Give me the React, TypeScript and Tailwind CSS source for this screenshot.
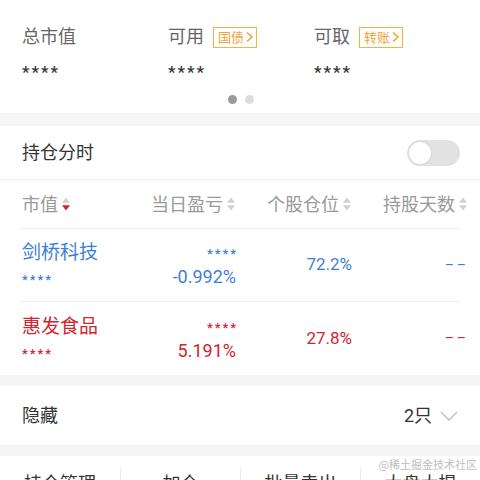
import React from "react";

const FONT = { fontFamily: 'Roboto, "Noto Sans CJK SC", sans-serif' };

function Sort({ active }: { active?: boolean }) {
  return (
    <svg width="10" height="16" viewBox="0 0 10 16" className="ml-[3px] shrink-0">
      <path d="M5 1.5 L9 6.8 L1 6.8 Z" fill="#d0d0d0" />
      <path d="M5 14.5 L9 9.2 L1 9.2 Z" fill={active ? "#d8202c" : "#d0d0d0"} />
    </svg>
  );
}

function Badge({ text }: { text: string }) {
  return (
    <span className="ml-[9px] flex h-[21px] items-center border border-[#f0b24a] pl-[4px] pr-[2px] text-[13px] leading-none text-[#eda63a]">
      {text}
      <svg width="9" height="12" viewBox="0 0 9 12" className="ml-[1px]">
        <path d="M2 1.5 L7 6 L2 10.5" fill="none" stroke="#eda63a" strokeWidth="1.6" />
      </svg>
    </span>
  );
}

function Stat({ label, badge }: { label: string; badge?: string }) {
  return (
    <div className="flex flex-col">
      <div className="flex h-[24px] items-center">
        <span className="text-[18px] leading-[24px] text-[#666]">{label}</span>
        {badge && <Badge text={badge} />}
      </div>
      <div className="mt-[11px] h-[24px] text-[17px] font-medium leading-[24px] tracking-[2px] text-[#333]">****</div>
    </div>
  );
}

type Row = { name: string; pct: string; pos: string; color: string };

const rows: Row[] = [
  { name: "剑桥科技", pct: "-0.992%", pos: "72.2%", color: "text-[#3d7fd6]" },
  { name: "惠发食品", pct: "5.191%", pos: "27.8%", color: "text-[#d0242e]" },
];

export default function App() {
  return (
    <div className="relative h-[480px] w-[480px] overflow-hidden bg-white" style={FONT}>
      {/* top stats */}
      <div className="h-[113px] pt-[25px]">
        <div className="grid grid-cols-[146px_146px_146px] pl-[22px]">
          <Stat label="总市值" />
          <Stat label="可用" badge="国债" />
          <Stat label="可取" badge="转账" />
        </div>
        <div className="mt-[11px] flex justify-center gap-[8px] pl-[2px]">
          <span className="h-[9px] w-[9px] rounded-full bg-[#9a9a9a]" />
          <span className="h-[9px] w-[9px] rounded-full bg-[#dcdcdc]" />
        </div>
      </div>
      <div className="h-[13px] bg-[#f5f5f5]" />

      {/* 持仓分时 */}
      <div className="flex h-[53px] items-center justify-between pl-[22px] pr-[20px]">
        <span className="text-[18px] text-[#333]">持仓分时</span>
        <div className="flex h-[26px] w-[53px] items-center rounded-full bg-[#e2e2e2] pl-[2px]">
          <span className="h-[22px] w-[22px] rounded-full bg-white shadow-[0_0_2px_rgba(0,0,0,0.15)]" />
        </div>
      </div>
      <div className="h-px bg-[#f2f2f2]" />

      {/* header */}
      <div className="grid h-[48px] grid-cols-[118px_96px_116px_116px] items-center pl-[22px] text-[18px] text-[#999]">
        <div className="flex items-center">
          <span>市值</span>
          <Sort active />
        </div>
        <div className="flex items-center justify-end">
          <span className="whitespace-nowrap">当日盈亏</span>
          <Sort />
        </div>
        <div className="flex items-center justify-end">
          <span className="whitespace-nowrap">个股仓位</span>
          <Sort />
        </div>
        <div className="flex items-center justify-end">
          <span className="whitespace-nowrap">持股天数</span>
          <Sort />
        </div>
      </div>

      {/* rows */}
      {rows.map((r, i) => (
        <div key={r.name}>
          <div className="ml-[20px] mr-[20px] h-px bg-[#f0f0f0]" />
          <div className={`grid grid-cols-[118px_96px_116px_116px] items-center pl-[22px] ${r.color} ${i === 0 ? "h-[72px]" : "h-[73px]"}`}>
            <div className="flex flex-col">
              <span className="text-[19px] leading-[26px]">{r.name}</span>
              <span className="pt-[4px] text-[13px] font-medium leading-[20px] tracking-[2px]">****</span>
            </div>
            <div className="flex flex-col items-end">
              <span className="mr-[-2px] pt-[4px] text-[13px] font-medium leading-[20px] tracking-[2px]">****</span>
              <span className="text-[18px] leading-[26px]">{r.pct}</span>
            </div>
            <div className="text-right text-[17px]">{r.pos}</div>
            <div className="mr-[-1px] text-right text-[14px] tracking-[3px]">––</div>
          </div>
        </div>
      ))}

      <div className="h-[11px] bg-[#f5f5f5]" />

      {/* 隐藏 */}
      <div className="flex h-[59px] items-center justify-between pl-[22px] pr-[22px]">
        <span className="text-[18px] text-[#333]">隐藏</span>
        <div className="flex items-center">
          <span className="text-[18px] text-[#333]">2只</span>
          <svg width="18" height="10" viewBox="0 0 18 10" className="ml-[8px]">
            <path d="M1 1 L9 9 L17 1" fill="none" stroke="#bdbdbd" strokeWidth="1.3" />
          </svg>
        </div>
      </div>
      <div className="h-[11px] bg-[#f5f5f5]" />

      {/* bottom actions */}
      <div className="grid grid-cols-4 pt-[11px] text-[18px] text-[#333]">
        {["持仓管理", "加仓", "批量卖出", "大盘大提"].map((t, i) => (
          <div key={t} className={`flex h-[32px] items-center justify-center ${i > 0 ? "border-l border-[#ececec]" : ""}`}>
            {t}
          </div>
        ))}
      </div>

      <div className="absolute right-[3px] top-[457px] text-[11px] leading-[14px] text-[#bdbdbd]" style={{ fontFamily: '"Noto Sans CJK SC", serif' }}>
        @稀土掘金技术社区
      </div>
    </div>
  );
}
